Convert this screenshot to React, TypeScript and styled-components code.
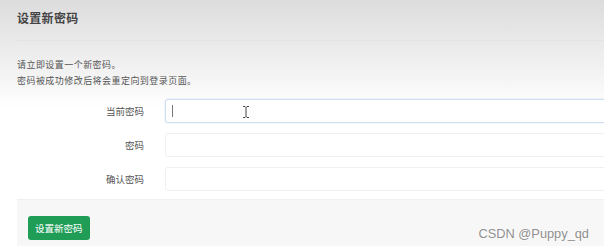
import React from "react";
import styled, { createGlobalStyle } from "styled-components";

const GlobalStyle = createGlobalStyle`
  html, body {
    margin: 0;
    padding: 0;
    overflow: hidden;
    background: #fff;
  }
  body {
    font-family: "Noto Sans CJK SC", "Liberation Sans", sans-serif;
  }
`;

const fields = [
  { label: "当前密码", focused: true },
  { label: "密码", focused: false },
  { label: "确认密码", focused: false },
];

export default function App() {
  return (
    <Page>
      <GlobalStyle />
      <Header>
        <Title>设置新密码</Title>
      </Header>

      <Intro>
        <p>请立即设置一个新密码。</p>
        <p>密码被成功修改后将会重定向到登录页面。</p>
      </Intro>

      <Form>
        {fields.map((f) => (
          <Row key={f.label}>
            <Label>{f.label}</Label>
            <InputBox $focused={f.focused}>
              {f.focused && <Caret />}
              {f.focused && (
                <Cursor width="10" height="14" viewBox="0 0 10 14">
                  <path
                    d="M2 1.5h2l1 1 1-1h2M5 2.5v9M2 12.5h2l1-1 1 1h2"
                    fill="none"
                    stroke="#fff"
                    strokeWidth="2.4"
                  />
                  <path
                    d="M2 1.5h2l1 1 1-1h2M5 2.5v9M2 12.5h2l1-1 1 1h2"
                    fill="none"
                    stroke="#444"
                    strokeWidth="1"
                  />
                </Cursor>
              )}
            </InputBox>
          </Row>
        ))}
      </Form>

      <Footer>
        <SubmitBtn>设置新密码</SubmitBtn>
      </Footer>

      <Watermark>CSDN @Puppy_qd</Watermark>
    </Page>
  );
}

const Page = styled.div`
  position: relative;
  width: 604px;
  height: 250px;
  box-sizing: border-box;
  padding-left: 17px;
  overflow: hidden;
  background: linear-gradient(
    to bottom,
    #dcdcdc 0px,
    #e9e9e9 40px,
    #f5f5f5 80px,
    #fdfdfd 100px,
    #fff 110px
  );
`;

const Header = styled.div`
  height: 40px;
  display: flex;
  align-items: center;
  border-bottom: 1px solid #e3e3e3;
  margin-right: -10px;
`;

const Title = styled.h3`
  margin: 0 0 6px;
  font-size: 12px;
  font-weight: 700;
  color: #444;
  letter-spacing: 0.3px;
`;

const Intro = styled.div`
  padding-top: 16px;
  p {
    margin: 0;
    font-size: 9px;
    line-height: 16px;
    color: #555;
    letter-spacing: 0.45px;
  }
`;

const Form = styled.div`
  display: flex;
  flex-direction: column;
  gap: 10px;
  margin: 10px -10px 0 0;
`;

const Row = styled.div`
  display: grid;
  grid-template-columns: 127px 1fr;
  column-gap: 21px;
  align-items: center;
`;

const Label = styled.label`
  text-align: right;
  font-size: 9.5px;
  color: #555;
`;

const InputBox = styled.div<{ $focused: boolean }>`
  position: relative;
  height: 24px;
  box-sizing: border-box;
  background: #fff;
  border-radius: 3px;
  border: 1px solid ${(p) => (p.$focused ? "#cfdef3" : "#efefef")};
  box-shadow: ${(p) => (p.$focused ? "0 0 2px rgba(120, 160, 220, 0.3)" : "none")};
`;

const Caret = styled.span`
  position: absolute;
  left: 6px;
  top: 5px;
  width: 1px;
  height: 12px;
  background: #777;
`;

const Cursor = styled.svg`
  position: absolute;
  left: 75px;
  top: 5px;
`;

const Footer = styled.div`
  margin: 8px -10px 0 0;
  height: 47px;
  box-sizing: border-box;
  padding: 13px 0 0 11px;
  background: #f7f7f7;
  border-top: 1px solid #f0f0f0;
`;

const SubmitBtn = styled.button`
  height: 24px;
  padding: 0 7px;
  border: none;
  border-radius: 3px;
  background: #1f9d57;
  color: #fff;
  font-family: "Noto Sans CJK SC", sans-serif;
  font-size: 9.5px;
`;

const Watermark = styled.div`
  position: absolute;
  right: 15px;
  bottom: 9px;
  font-family: "Liberation Sans", Arial, sans-serif;
  font-size: 12.8px;
  color: #8f8f8f;
  text-shadow: 0 0 2px #fff, 0 0 2px #fff;
`;
